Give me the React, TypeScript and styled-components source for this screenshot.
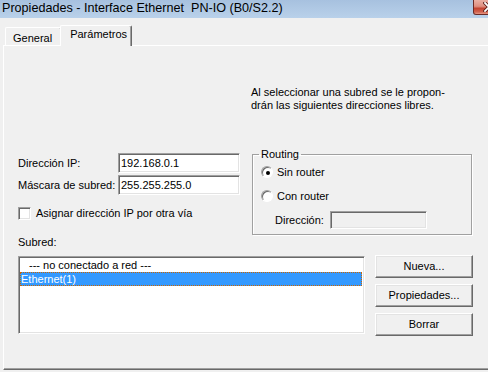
import { createGlobalStyle, styled } from 'styled-components';

const GlobalStyle = createGlobalStyle`
  html, body {
    margin: 0;
    padding: 0;
    background: #f0f0f0;
  }
  body {
    font-family: "Liberation Sans", Arial, sans-serif;
    font-size: 11px;
    color: #000;
  }
`;

const Window = styled.div`
  width: 488px;
  height: 372px;
  overflow: hidden;
  background: #f0f0f0;
  display: flex;
  flex-direction: column;
`;

const TitleBar = styled.div`
  flex: none;
  height: 18px;
  display: flex;
  align-items: flex-start;
  background: linear-gradient(#a7c1df, #b9d1ea);
`;

const Title = styled.div`
  flex: 1;
  padding-left: 2px;
  line-height: 16px;
  font-size: 12.6px;
  white-space: pre;
`;

const CloseButton = styled.div`
  flex: none;
  width: 43px;
  height: 15px;
  margin-right: -28px;
  box-sizing: border-box;
  border: 1px solid #6b2b26;
  border-top: none;
  border-bottom-left-radius: 3px;
  background: linear-gradient(#eab0a4 0%, #df8f80 45%, #c44431 60%, #d0624f 85%, #e69885 100%);
  display: flex;
  align-items: center;
  padding-left: 9px;
`;

const Body = styled.div`
  flex: 1;
  display: flex;
  flex-direction: column;
  padding: 7px 0 2px 3px;
`;

const TabStrip = styled.div`
  display: flex;
  align-items: flex-end;
  height: 21px;
  padding-left: 2px;
  margin-bottom: -1px;
  position: relative;
  z-index: 1;
`;

const Tab = styled.div<{ $active?: boolean }>`
  box-sizing: border-box;
  height: ${(p) => (p.$active ? '21px' : '18px')};
  margin: ${(p) => (p.$active ? '0 -2px' : '0 0 1px 0')};
  padding: ${(p) => (p.$active ? '2px 4px 0 9px' : '4px 9px 0 7px')};
  background: #f0f0f0;
  border-top: 1px solid #fff;
  border-left: 1px solid #fff;
  border-right: 1px solid #696969;
  box-shadow: inset -1px 0 0 #a0a0a0;
  border-top-left-radius: 2px;
  border-top-right-radius: 2px;
  position: relative;
  z-index: ${(p) => (p.$active ? 2 : 1)};
  line-height: 13px;
`;

const Panel = styled.div`
  flex: 1;
  width: 520px;
  box-sizing: border-box;
  border-top: 1px solid #fff;
  border-left: 1px solid #fff;
  border-bottom: 1px solid #696969;
  box-shadow: inset 0 -1px 0 #a0a0a0;
  padding: 40px 0 0 14px;
  line-height: 13px;
`;

const Hint = styled.p`
  margin: 0 0 0 233px;
  line-height: 13px;
`;

const Middle = styled.div`
  display: flex;
  align-items: flex-start;
  gap: 12px;
  margin-top: 36px;
`;

const Addressing = styled.div`
  width: 222px;
  margin-top: 5px;
  display: flex;
  flex-direction: column;
`;

const FieldRow = styled.div`
  display: grid;
  grid-template-columns: 100px 122px;
  align-items: center;
  margin-bottom: 2px;
`;

const TextBox = styled.input<{ $width?: number }>`
  box-sizing: border-box;
  width: ${(p) => (p.$width ? `${p.$width}px` : '100%')};
  height: 20px;
  margin: 0;
  padding: 0 2px;
  font: inherit;
  color: #000;
  background: #fff;
  border-style: solid;
  border-width: 1px;
  border-color: #a0a0a0 #fff #fff #a0a0a0;
  box-shadow: inset 1px 1px 0 #696969, inset -1px -1px 0 #e3e3e3;
  outline: none;

  &:disabled {
    background: #f0f0f0;
  }
`;

const CheckRow = styled.label`
  display: flex;
  align-items: center;
  gap: 5px;
  margin-top: 10px;
`;

const CheckBox = styled.span`
  box-sizing: border-box;
  width: 13px;
  height: 13px;
  background: #fff;
  border-style: solid;
  border-width: 1px;
  border-color: #a0a0a0 #fff #fff #a0a0a0;
  box-shadow: inset 1px 1px 0 #696969, inset -1px -1px 0 #e3e3e3;
`;

const GroupBox = styled.fieldset`
  box-sizing: border-box;
  width: 220px;
  margin: 0;
  min-width: 0;
  padding: 0 0 5px 8px;
  border: 1px solid #a0a0a0;
  box-shadow: inset 1px 1px 0 #fff, 1px 1px 0 #fff;
`;

const Legend = styled.legend`
  margin-left: -2px;
  padding: 0 2px;
  line-height: 13px;
`;

const RadioRow = styled.label<{ $gap: number }>`
  display: flex;
  align-items: center;
  gap: 4px;
  height: 16px;
  margin-top: ${(p) => p.$gap}px;
`;

const Radio = styled.span<{ $checked?: boolean }>`
  box-sizing: border-box;
  width: 12px;
  height: 12px;
  border-radius: 50%;
  background: #fff;
  border: 1px solid;
  border-color: #a0a0a0 #fff #fff #a0a0a0;
  box-shadow: inset 1px 1px 0 #696969;
  display: flex;
  align-items: center;
  justify-content: center;

  &::after {
    content: '';
    display: ${(p) => (p.$checked ? 'block' : 'none')};
    width: 4px;
    height: 4px;
    border-radius: 50%;
    background: #000;
    margin: 1px 0 0 1px;
  }
`;

const AddressRow = styled.div`
  display: flex;
  align-items: center;
  margin-top: 7px;
  padding-left: 14px;
  height: 18px;

  span {
    width: 55px;
  }
`;

const SubnetLabel = styled.div`
  margin-top: 1px;
`;

const Bottom = styled.div`
  display: flex;
  align-items: flex-start;
  gap: 10px;
  margin-top: 6px;
`;

const ListBox = styled.div`
  box-sizing: border-box;
  width: 347px;
  height: 78px;
  margin-top: 1px;
  background: #fff;
  border-style: solid;
  border-width: 1px;
  border-color: #a0a0a0 #fff #fff #a0a0a0;
  box-shadow: inset 1px 1px 0 #696969, inset -1px -1px 0 #e3e3e3;
  padding: 1px 2px 0 1px;
`;

const ListItem = styled.div<{ $selected?: boolean; $indent?: number }>`
  box-sizing: border-box;
  height: 14px;
  line-height: 12px;
  padding-left: ${(p) => p.$indent ?? 0}px;
  background: ${(p) => (p.$selected ? '#3399ff' : 'transparent')};
  color: ${(p) => (p.$selected ? '#fff' : '#000')};
  border: 1px ${(p) => (p.$selected ? 'dotted #cc6600' : 'solid transparent')};
`;

const Buttons = styled.div`
  display: flex;
  flex-direction: column;
  gap: 6px;
`;

const Button = styled.button`
  box-sizing: border-box;
  width: 98px;
  height: 23px;
  margin: 0;
  padding: 0;
  font: inherit;
  color: #000;
  background: #f0f0f0;
  border-style: solid;
  border-width: 1px;
  border-color: #fff #696969 #696969 #fff;
  box-shadow: inset -1px -1px 0 #a0a0a0, inset 1px 1px 0 #e3e3e3;
`;

export default function App() {
  return (
    <>
      <GlobalStyle />
      <Window>
        <TitleBar>
          <Title>Propiedades - Interface Ethernet  PN-IO (B0/S2.2)</Title>
          <CloseButton>
            <svg width="12" height="10" viewBox="0 0 12 10">
              <path d="M2 1 L10 9 M10 1 L2 9" stroke="#5a1f1a" strokeWidth="3.4" strokeLinecap="square" />
              <path d="M2 1 L10 9 M10 1 L2 9" stroke="#fff" strokeWidth="1.8" strokeLinecap="square" />
            </svg>
          </CloseButton>
        </TitleBar>
        <Body>
          <TabStrip>
            <Tab>General</Tab>
            <Tab $active>Parámetros</Tab>
          </TabStrip>
          <Panel>
            <Hint>
              Al seleccionar una subred se le propon-
              <br />
              drán las siguientes direcciones libres.
            </Hint>
            <Middle>
              <Addressing>
                <FieldRow>
                  <span>Dirección IP:</span>
                  <TextBox readOnly value="192.168.0.1" />
                </FieldRow>
                <FieldRow>
                  <span>Máscara de subred:</span>
                  <TextBox readOnly value="255.255.255.0" />
                </FieldRow>
                <CheckRow>
                  <CheckBox />
                  Asignar dirección IP por otra vía
                </CheckRow>
              </Addressing>
              <GroupBox>
                <Legend>Routing</Legend>
                <RadioRow $gap={3}>
                  <Radio $checked />
                  Sin router
                </RadioRow>
                <RadioRow $gap={8}>
                  <Radio />
                  Con router
                </RadioRow>
                <AddressRow>
                  <span>Dirección:</span>
                  <TextBox disabled readOnly value="" $width={97} style={{ height: 18 }} />
                </AddressRow>
              </GroupBox>
            </Middle>
            <SubnetLabel>Subred:</SubnetLabel>
            <Bottom>
              <ListBox>
                <ListItem $indent={8}>--- no conectado a red ---</ListItem>
                <ListItem $selected>Ethernet(1)</ListItem>
              </ListBox>
              <Buttons>
                <Button>Nueva...</Button>
                <Button>Propiedades...</Button>
                <Button>Borrar</Button>
              </Buttons>
            </Bottom>
          </Panel>
        </Body>
      </Window>
    </>
  );
}
